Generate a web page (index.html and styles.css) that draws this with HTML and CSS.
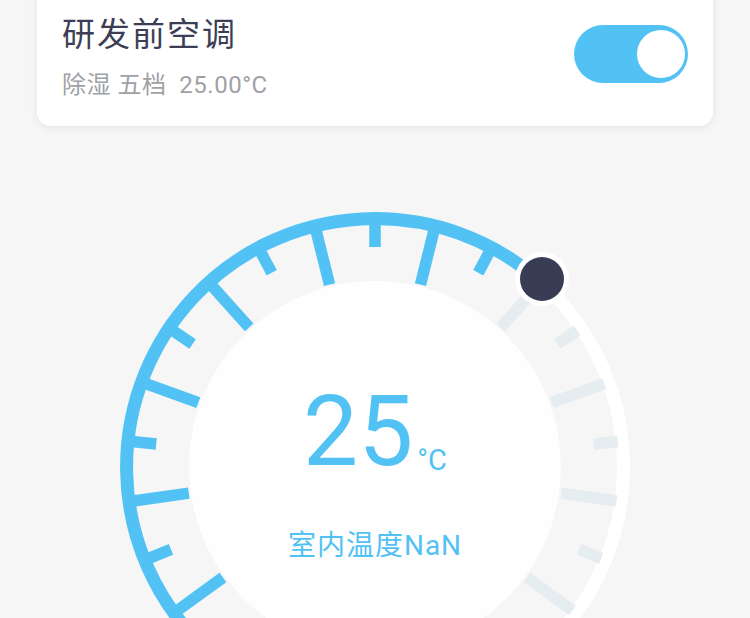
FILE: index.html
```html
<!DOCTYPE html>
<html lang="zh-CN">
<head>
<meta charset="utf-8">
<title>研发前空调</title>
<link rel="stylesheet" href="styles.css">
</head>
<body>
<div class="page">
  <section class="card">
    <div class="card-text">
      <div class="title">研发前空调</div>
      <div class="subtitle">除湿 五档&nbsp;&nbsp;25.00°C</div>
    </div>
    <div class="toggle"><span class="toggle-knob"></span></div>
  </section>

  <section class="dial">
    <svg class="dial-svg" width="560" height="560" viewBox="0 0 560 560" aria-hidden="true">
      <circle cx="280" cy="280" r="186" class="inner"/>
      <path class="track" d="M443.04 92.46 A248.5 248.5 0 0 1 455.71 455.71"/>
      <path class="progress" d="M104.29 455.71 A248.5 248.5 0 0 1 443.04 92.46"/>
      <g class="ticks ticks-on">
        <line x1="280" y1="36" x2="280" y2="92" transform="rotate(-126 280 280)"/>
        <line x1="280" y1="36" x2="280" y2="60" transform="rotate(-112 280 280)"/>
        <line x1="280" y1="36" x2="280" y2="92" transform="rotate(-98 280 280)"/>
        <line x1="280" y1="36" x2="280" y2="60" transform="rotate(-84 280 280)"/>
        <line x1="280" y1="36" x2="280" y2="92" transform="rotate(-70 280 280)"/>
        <line x1="280" y1="36" x2="280" y2="60" transform="rotate(-56 280 280)"/>
        <line x1="280" y1="36" x2="280" y2="92" transform="rotate(-42 280 280)"/>
        <line x1="280" y1="36" x2="280" y2="60" transform="rotate(-28 280 280)"/>
        <line x1="280" y1="36" x2="280" y2="92" transform="rotate(-14 280 280)"/>
        <line x1="280" y1="36" x2="280" y2="60"/>
        <line x1="280" y1="36" x2="280" y2="92" transform="rotate(14 280 280)"/>
        <line x1="280" y1="36" x2="280" y2="60" transform="rotate(28 280 280)"/>
      </g>
      <g class="ticks ticks-off">
        <line x1="280" y1="36" x2="280" y2="92" transform="rotate(42 280 280)"/>
        <line x1="280" y1="36" x2="280" y2="60" transform="rotate(56 280 280)"/>
        <line x1="280" y1="36" x2="280" y2="92" transform="rotate(70 280 280)"/>
        <line x1="280" y1="36" x2="280" y2="60" transform="rotate(84 280 280)"/>
        <line x1="280" y1="36" x2="280" y2="92" transform="rotate(98 280 280)"/>
        <line x1="280" y1="36" x2="280" y2="60" transform="rotate(112 280 280)"/>
        <line x1="280" y1="36" x2="280" y2="92" transform="rotate(126 280 280)"/>
      </g>
      <circle cx="447" cy="92" r="27" class="knob-ring"/>
      <circle cx="447" cy="92" r="22" class="knob"/>
    </svg>
    <div class="readout">
      <div class="setpoint"><span class="num">25</span><span class="unit">°C</span></div>
      <div class="indoor">室内温度NaN</div>
    </div>
  </section>
</div>
</body>
</html>
```

FILE: styles.css
```css
html, body {
  margin: 0;
  padding: 0;
  overflow: hidden;
  background: #f6f6f6;
}

body {
  font-family: Roboto, "Noto Sans CJK SC", sans-serif;
}

.page {
  width: 750px;
  height: 618px;
  overflow: hidden;
}

.card {
  margin: -20px 37px 0 37px;
  padding: 35px 25px 26px 25px;
  background: #ffffff;
  border-radius: 14px;
  box-shadow: 0 2px 8px rgba(0, 0, 0, 0.07);
  display: flex;
  justify-content: space-between;
  align-items: flex-start;
}

.card-text {
  display: flex;
  flex-direction: column;
  gap: 15px;
}

.title {
  font-size: 33px;
  line-height: 40px;
  letter-spacing: 2px;
  color: #3b3e54;
}

.subtitle {
  font-size: 24px;
  line-height: 30px;
  letter-spacing: 0.5px;
  color: #a0a1a5;
}

.toggle {
  margin-top: 10px;
  width: 114px;
  height: 58px;
  border-radius: 29px;
  background: #52c2f5;
  display: flex;
  align-items: center;
  justify-content: flex-end;
  padding-right: 3px;
  box-sizing: border-box;
}

.toggle-knob {
  width: 48px;
  height: 48px;
  border-radius: 50%;
  background: #ffffff;
}

.dial {
  position: relative;
  width: 560px;
  height: 560px;
  margin: 61px auto 0 auto;
}

.dial-svg {
  display: block;
}

.inner {
  fill: #fefefe;
}

.track {
  fill: none;
  stroke: #ffffff;
  stroke-width: 13;
}

.progress {
  fill: none;
  stroke: #52c2f5;
  stroke-width: 13;
}

.ticks line {
  stroke-width: 11.5;
}

.ticks-on line {
  stroke: #52c2f5;
}

.ticks-off line {
  stroke: #e5edf0;
}

.knob-ring {
  fill: #ffffff;
}

.knob {
  fill: #393c55;
}

.readout {
  position: absolute;
  top: 0;
  left: 0;
  right: 0;
  padding-top: 196px;
  text-align: center;
  color: #52c2f5;
}

.setpoint {
  line-height: 98px;
  height: 98px;
}

.num {
  font-size: 98px;
}

.unit {
  font-size: 29px;
  margin-left: 4px;
  vertical-align: -5px;
}

.indoor {
  margin-top: 51px;
  font-size: 28px;
  line-height: 28px;
  letter-spacing: 1px;
}
```
